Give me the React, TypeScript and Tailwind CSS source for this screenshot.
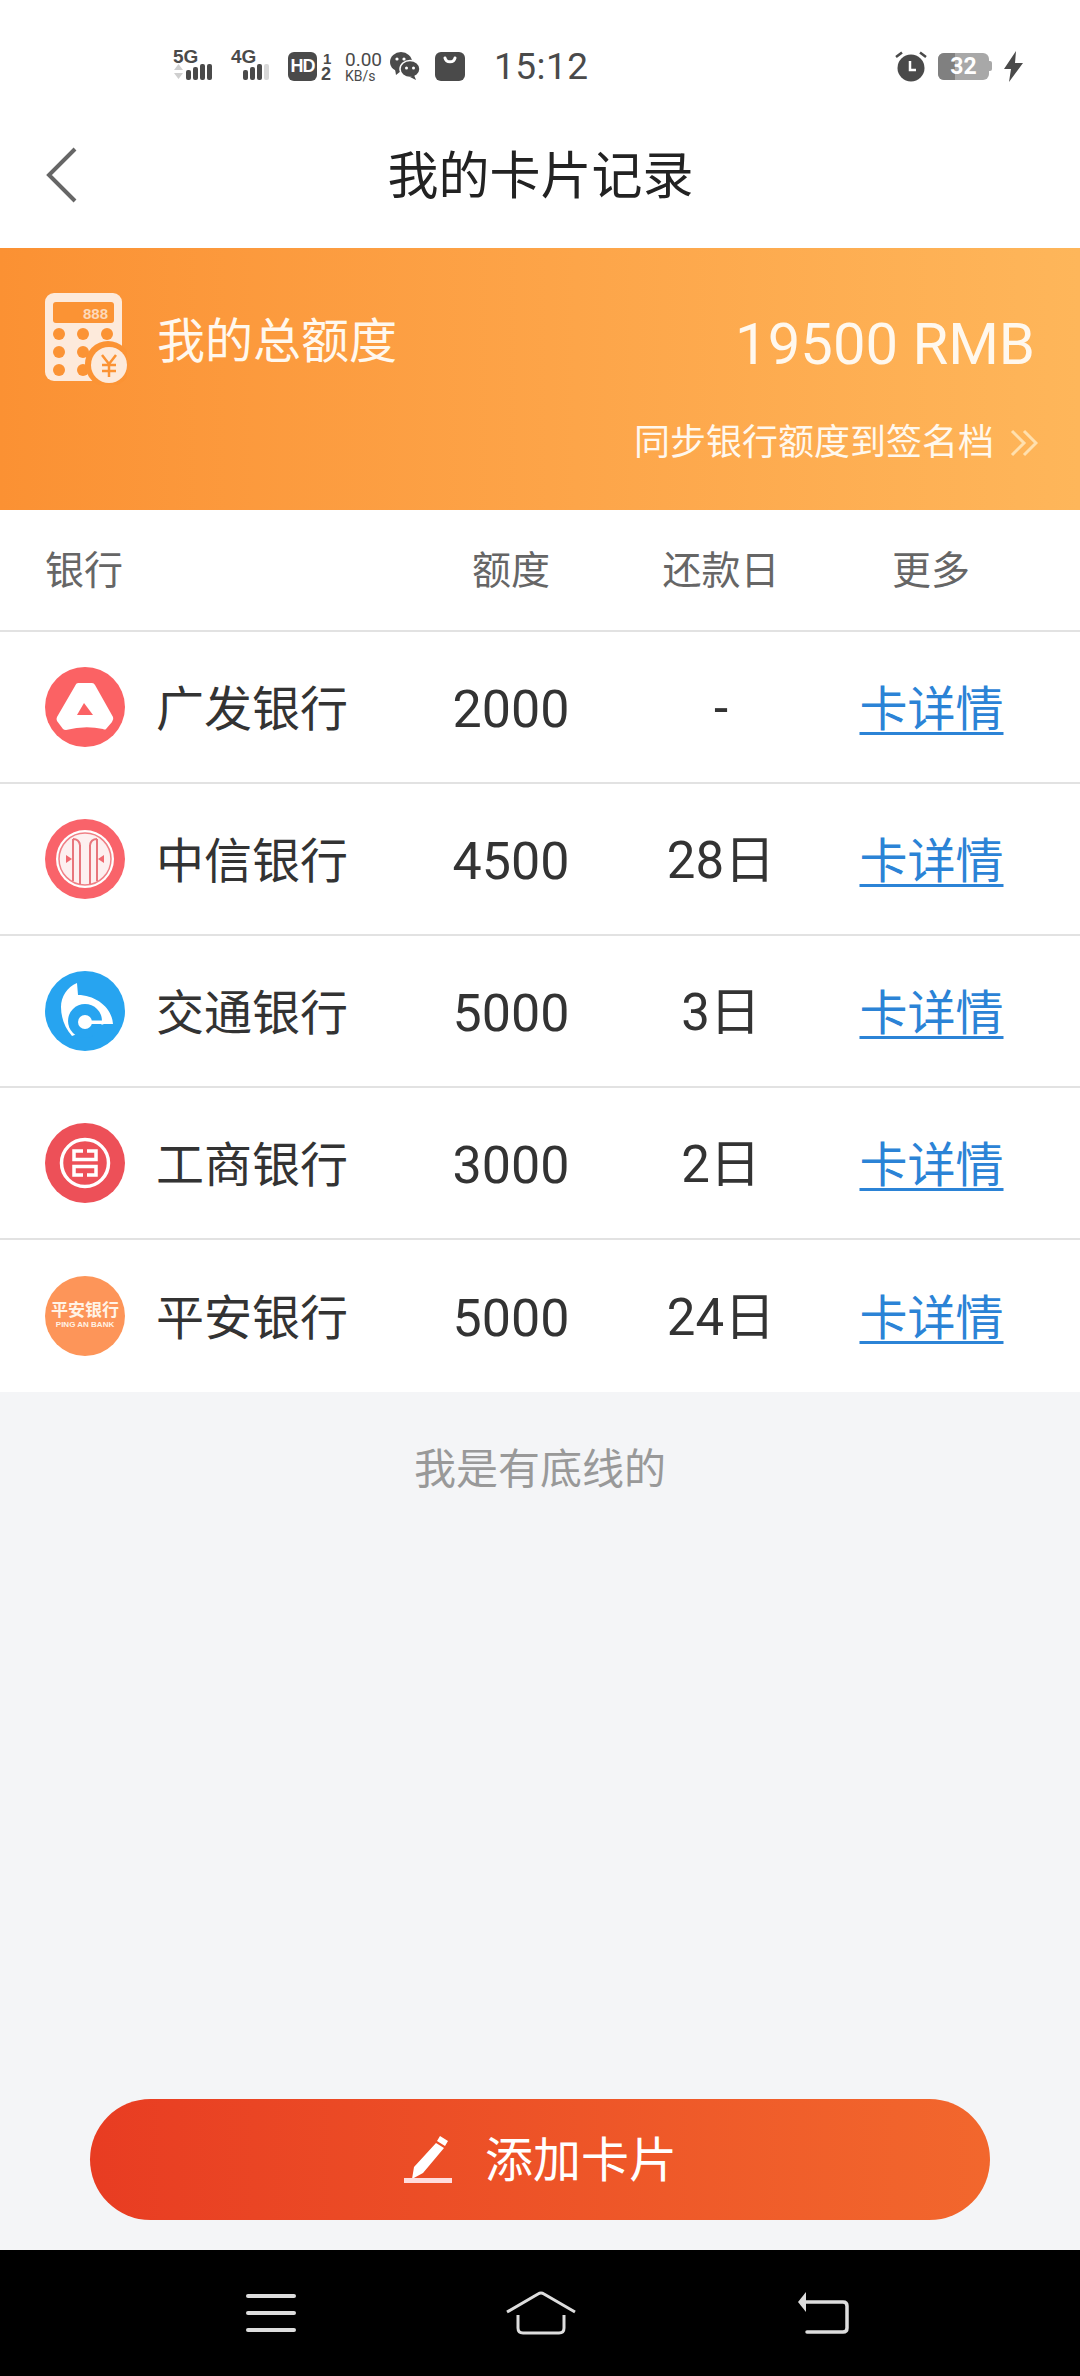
import React from "react";

const CJK = "font-['Roboto','Noto_Sans_CJK_SC',sans-serif]";

function Bars({ last }: { last?: boolean }) {
  const hs = [10, 13, 16, 16];
  return (
    <div className="flex items-end gap-[2px]">
      {hs.map((h, i) => (
        <div key={i} style={{ height: h }} className={`w-[5px] rounded-[2px] ${last && i === 3 ? "bg-[#d8d8d8]" : "bg-[#4a4a4a]"}`} />
      ))}
    </div>
  );
}

function StatusBar() {
  return (
    <div className="flex h-[100px] items-center pl-[173px] pr-[57px] pt-[32px] text-[#4a4a4a]">
      <div className="flex w-[58px] -translate-y-[2px] flex-col">
        <span className="text-[19px] font-bold leading-[15px] font-['Liberation_Sans',sans-serif]">5G</span>
        <div className="flex items-end gap-[2px]">
          <svg width="11" height="16" viewBox="0 0 11 16"><path d="M5.500 0 10 6H1Z M1 9H10L5.500 15Z" fill="#cfcfcf" /></svg>
          <Bars />
        </div>
      </div>
      <div className="flex w-[57px] -translate-y-[2px] flex-col">
        <span className="text-[19px] font-bold leading-[15px] font-['Liberation_Sans',sans-serif]">4G</span>
        <div className="pl-[12px]"><Bars last /></div>
      </div>
      <div className="flex h-[29px] w-[29px] items-center justify-center rounded-[6px] bg-[#4a4a4a] text-[18px] font-bold leading-none tracking-[-1px] text-white font-['Liberation_Sans',sans-serif]">HD</div>
      <div className="ml-[4px] flex w-[24px] flex-col font-bold font-['Liberation_Sans',sans-serif]">
        <span className="pl-[2px] text-[15px] leading-[15px]">1</span>
        <span className="text-[18px] leading-[16px]">2</span>
      </div>
      <div className="flex w-[45px] flex-col items-start font-['Roboto',sans-serif]">
        <span className="text-[19px] leading-[19px]">0.00</span>
        <span className="text-[14px] leading-[14px]">KB/s</span>
      </div>
      <svg width="30" height="30" viewBox="0 0 30 30" className="shrink-0">
        <ellipse cx="11" cy="11" rx="11" ry="10" fill="#4a4a4a" />
        <path d="M5 18l1 6 5-4z" fill="#4a4a4a" />
        <ellipse cx="20" cy="18" rx="10" ry="8.500" fill="#4a4a4a" stroke="#fff" strokeWidth="1.500" />
        <path d="M24 24l2 5-6-3z" fill="#4a4a4a" />
        <circle cx="7" cy="8" r="1.600" fill="#fff" />
        <circle cx="14" cy="8" r="1.600" fill="#fff" />
        <circle cx="16.500" cy="17" r="1.500" fill="#fff" />
        <circle cx="23.500" cy="17" r="1.500" fill="#fff" />
      </svg>
      <div className="ml-[15px] flex h-[29px] w-[30px] justify-center rounded-[6px] bg-[#4a4a4a]">
        <svg width="16" height="14" viewBox="0 0 16 14"><path d="M3 6c1 5 9 5 10 0" fill="none" stroke="#fff" strokeWidth="3" strokeLinecap="round" /></svg>
      </div>
      <span className="ml-[29px] text-[37px] leading-none tracking-[0.5px] font-['Roboto',sans-serif]">15:12</span>
      <div className="flex-1" />
      <svg width="34" height="32" viewBox="0 0 34 32" className="shrink-0">
        <circle cx="17" cy="18" r="13.500" fill="#4a4a4a" />
        <path d="M2 7l6-4.500M32 7l-6-4.500" stroke="#4a4a4a" strokeWidth="2.500" />
        <path d="M16 11v9h6" stroke="#fff" strokeWidth="2.500" fill="none" />
      </svg>
      <div className="ml-[10px] flex items-center">
        <div className="relative flex h-[27px] w-[51px] items-center justify-center overflow-hidden rounded-[6px] bg-[#a8a8a8]">
          <div className="absolute inset-y-0 left-0 w-[17px] bg-[#808080]" />
          <span className="relative text-[23px] font-bold leading-none text-white font-['Roboto',sans-serif]">32</span>
        </div>
        <div className="h-[10px] w-[3px] rounded-r-[2px] bg-[#a8a8a8]" />
      </div>
      <svg width="19" height="31" viewBox="0 0 19 31" className="ml-[12px] shrink-0">
        <path d="M12 0 0 18h7l-2 13L19 12h-8z" fill="#4a4a4a" />
      </svg>
    </div>
  );
}

function NavBar() {
  return (
    <div className="relative flex h-[148px] items-center justify-center pt-[4px]">
      <svg width="34" height="58" viewBox="0 0 34 58" className="absolute left-[45px] top-[46px]">
        <path d="M30 3 4 29l26 26" fill="none" stroke="#666" strokeWidth="4" />
      </svg>
      <span className="pl-[1px] text-[51px] leading-none text-[#222]">我的卡片记录</span>
    </div>
  );
}

function CalcIcon() {
  const dots = [[14, 41], [38, 41], [62, 41], [14, 59], [38, 59], [14, 77], [38, 77]];
  return (
    <svg width="82" height="92" viewBox="0 0 82 92" className="shrink-0">
      <rect x="0" y="0" width="77" height="88" rx="9" fill="#fdeadb" />
      <rect x="8" y="9" width="61" height="21" rx="3" fill="#fb9334" />
      <text x="63" y="26" textAnchor="end" fontSize="15" fontWeight="700" fill="#fdd9b8" fontFamily="Liberation Sans, sans-serif">888</text>
      {dots.map(([x, y], i) => <circle key={i} cx={x} cy={y} r="6" fill="#fb9334" />)}
      <circle cx="63" cy="71" r="23" fill="#fb9334" />
      <circle cx="64" cy="72" r="18" fill="#fdeadb" />
      <path d="M57 62l7 9 7-9M57 72h14M57 78h14M64 71v13" stroke="#fb9334" strokeWidth="2.500" fill="none" />
    </svg>
  );
}

function Banner() {
  return (
    <div className="flex h-[262px] flex-col bg-gradient-to-r from-[#fb9133] to-[#feb65a] px-[45px] text-[#fff8ee]">
      <div className="flex items-start pt-[45px]">
        <CalcIcon />
        <span className="ml-[30px] mt-[19px] text-[48px] leading-[60px]">我的总额度</span>
        <span className="ml-auto mt-[21px] text-[58px] leading-[60px] font-['Roboto',sans-serif]">19500 RMB</span>
      </div>
      <div className="mt-[33px] flex items-center justify-end">
        <span className="text-[36px] leading-[50px]">同步银行额度到签名档</span>
        <svg width="28" height="30" viewBox="0 0 28 30" className="ml-[16px] mr-[-3px] shrink-0">
          <path d="M2 3l12 12L2 27M14 3l12 12-12 12" fill="none" stroke="#ffe0ae" strokeWidth="3" />
        </svg>
      </div>
    </div>
  );
}

function Gf() {
  return (
    <svg width="80" height="80" viewBox="0 0 80 80">
      <circle cx="40" cy="40" r="40" fill="#fb6264" />
      <path d="M33 16H47Q49 16 50 18L68 50Q69 52 67 55L61 62Q60 63 58 62Q40 58 21 63Q19 63 18 62L12 54Q11 52 12 50L30 19Q31 16 33 16Z" fill="#fff" />
      <path d="M39 36 48 48H32Z" fill="#fb6264" />
    </svg>
  );
}

function Citic() {
  return (
    <svg width="80" height="80" viewBox="0 0 80 80">
      <circle cx="40" cy="40" r="40" fill="#f9636a" />
      <circle cx="40" cy="40" r="29" fill="#fff" />
      <circle cx="40" cy="40" r="26" fill="#fdf0f0" stroke="#f08086" strokeWidth="1.500" />
      <path d="M28 20V62M35 26V65M45 26V65M52 20V62M28 20Q34 20 35 26M52 20Q46 20 45 26" fill="none" stroke="#e8757c" strokeWidth="2" />
      <path d="M21 36l6 4-6 4zM59 36l-6 4 6 4z" fill="#f0686f" />
    </svg>
  );
}

function Bocom() {
  return (
    <svg width="80" height="80" viewBox="0 0 80 80">
      <circle cx="40" cy="40" r="40" fill="#27a4f0" />
      <path d="M32 12C22 16 16 26 16 36C16 47 20 57 27 65L40 60L59 53H68C67 36 50 24 33 24Z" fill="#fff" />
      <circle cx="40" cy="50" r="17" fill="#27a4f0" />
      <circle cx="40" cy="51" r="7" fill="#fff" />
      <rect x="40" y="49.500" width="19" height="3.500" fill="#fff" />
    </svg>
  );
}

function Icbc() {
  return (
    <svg width="80" height="80" viewBox="0 0 80 80">
      <circle cx="40" cy="40" r="40" fill="#ed5058" />
      <circle cx="40" cy="40" r="23.500" fill="none" stroke="#fff" strokeWidth="3.500" />
      <path d="M38 28H29V36.500H51V28H42M38 52H29V43.500H51V52H42" fill="none" stroke="#fff" strokeWidth="3.500" />
    </svg>
  );
}

function PingAn() {
  return (
    <div className="flex h-[80px] w-[80px] flex-col items-center justify-center rounded-full bg-[#fd9559] text-[#fff3e6]">
      <span className="mt-[-2px] whitespace-nowrap text-[17px] font-bold leading-[20px]">平安银行</span>
      <span className="whitespace-nowrap text-[8px] font-bold leading-[10px] font-['Liberation_Sans',sans-serif]">PING AN BANK</span>
    </div>
  );
}

const rows = [
  { logo: <Gf />, name: "广发银行", amount: "2000", day: "-" },
  { logo: <Citic />, name: "中信银行", amount: "4500", day: "28日" },
  { logo: <Bocom />, name: "交通银行", amount: "5000", day: "3日" },
  { logo: <Icbc />, name: "工商银行", amount: "3000", day: "2日" },
  { logo: <PingAn />, name: "平安银行", amount: "5000", day: "24日" },
];

function Table() {
  return (
    <div className="bg-white">
      <div className="flex h-[122px] items-center border-b-[2px] border-[#e2e2e2] pl-[45px] pr-[44px] pt-[2px] text-[39px] text-[#666]">
        <div className="w-[361px]">银行</div>
        <div className="w-[210px] text-center">额度</div>
        <div className="w-[210px] text-center">还款日</div>
        <div className="w-[210px] text-center">更多</div>
      </div>
      {rows.map((r, i) => (
        <div key={i} className={`flex h-[152px] items-center pl-[45px] pr-[44px] text-[48px] text-[#333] ${i < 4 ? "border-b-[2px] border-[#e2e2e2]" : ""}`}>
          <div className="flex w-[361px] items-center">
            {r.logo}
            <span className="ml-[31px] pt-[5px]">{r.name}</span>
          </div>
          <div className="w-[210px] pt-[5px] text-center text-[52px]">{r.amount}</div>
          <div className="w-[210px] pt-[5px] text-center text-[51px]">{r.day}</div>
          <div className="w-[210px] pl-[1px] pt-[5px] text-center text-[#2b83d6] underline underline-offset-[6px] decoration-[3px]">卡详情</div>
        </div>
      ))}
    </div>
  );
}

export default function App() {
  return (
    <div className={`flex h-[2376px] w-[1080px] flex-col overflow-hidden bg-[#f4f5f7] ${CJK}`}>
      <div className="bg-white">
        <StatusBar />
        <NavBar />
      </div>
      <Banner />
      <Table />
      <div className="flex h-[154px] items-center justify-center text-[42px] text-[#999]">我是有底线的</div>
      <div className="flex flex-1 items-end justify-center pb-[30px]">
        <div className="flex h-[121px] w-[900px] items-center justify-center rounded-full bg-gradient-to-r from-[#e83c22] to-[#f2672d] text-[48px] text-[#fff]">
          <svg width="50" height="48" viewBox="0 0 50 48" className="mr-[32px] shrink-0">
            <path d="M37 0l8 5-3 5-8-5zM33 7l8 5-21 25-11 6 2-12z" fill="#fff" />
            <rect x="1" y="42" width="48" height="5" fill="#fdd" />
          </svg>
          <span className="pt-[3px]">添加卡片</span>
        </div>
      </div>
      <div className="flex h-[126px] items-center justify-between bg-black pl-[246px] pr-[231px]">
        <div className="flex h-[38px] w-[50px] flex-col justify-between">
          <div className="h-[4px] rounded-full bg-[#ddd]" />
          <div className="h-[4px] rounded-full bg-[#ddd]" />
          <div className="h-[4px] rounded-full bg-[#ddd]" />
        </div>
        <svg width="72" height="44" viewBox="0 0 72 44" className="mr-[11px] shrink-0">
          <path d="M2 21 33 3q3-2 6 0l31 18" fill="none" stroke="#ddd" strokeWidth="3" />
          <path d="M13 24V37q0 5 5 5H54q5 0 5-5V24" fill="none" stroke="#ddd" strokeWidth="3" />
        </svg>
        <svg width="52" height="44" viewBox="0 0 52 44" className="shrink-0">
          <path d="M1 11 9 1V21Z" fill="#ddd" />
          <path d="M8 11H46q4 0 4 4V37q0 4-4 4H10" fill="none" stroke="#ddd" strokeWidth="3.500" strokeLinecap="round" />
        </svg>
      </div>
    </div>
  );
}
